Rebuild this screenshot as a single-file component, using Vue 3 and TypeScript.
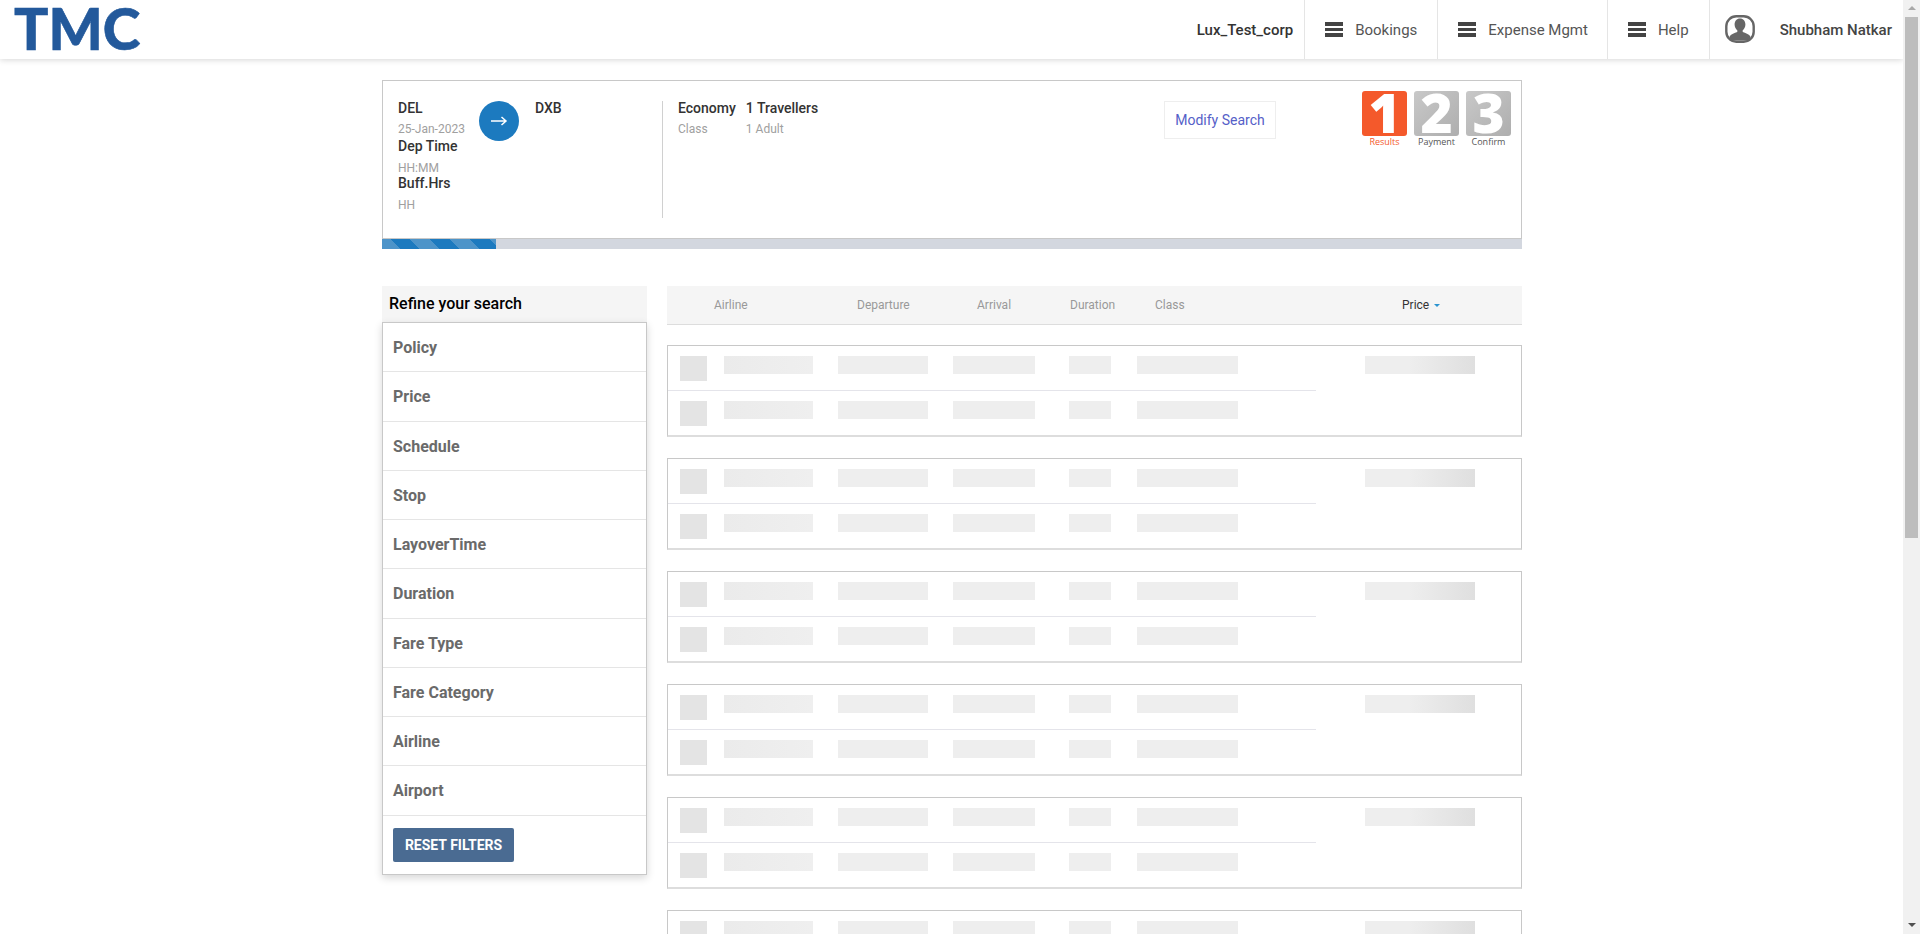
<script setup lang="ts">
const menus = ['Bookings', 'Expense Mgmt', 'Help']
const filters = [
  'Policy',
  'Price',
  'Schedule',
  'Stop',
  'LayoverTime',
  'Duration',
  'Fare Type',
  'Fare Category',
  'Airline',
  'Airport',
]
const steps = [
  { num: '1', label: 'Results', active: true },
  { num: '2', label: 'Payment', active: false },
  { num: '3', label: 'Confirm', active: false },
]
const cards = [1, 2, 3, 4, 5, 6]
const segments = [1, 2]
</script>

<template>
  <div class="page">
    <div class="content">
      <header class="topbar">
        <div class="logo">TMC</div>
        <div class="nav">
          <div class="corp">Lux_Test_corp</div>
          <div v-for="m in menus" :key="m" class="nav-item">
            <span class="burger"><i /><i /><i /></span>
            <span>{{ m }}</span>
          </div>
          <div class="user">
            <svg class="avatar" width="30" height="28" viewBox="0 0 30 28">
              <path
                d="M15 3.500c-3.300 0-5.400 2.600-5.400 6 0 2.500 1.100 4.600 2.700 5.700v1.700c-2.900 1-6 2-7.600 4.300v4.300h20.600v-4.300c-1.600-2.300-4.700-3.300-7.600-4.300v-1.700c1.600-1.100 2.700-3.200 2.700-5.700 0-3.400-2.100-6-5.400-6z"
                fill="#666"
              />
              <rect x="1.300" y="1.300" width="27.400" height="25.400" rx="10" fill="none" stroke="#666" stroke-width="2.400" />
            </svg>
            <span class="user-name">Shubham Natkar</span>
          </div>
        </div>
      </header>

      <main class="wrap">
        <section class="summary">
          <div class="summary-body">
            <div class="from">
              <div class="strong">DEL</div>
              <div class="muted">25-Jan-2023</div>
              <div class="strong dep">Dep Time</div>
              <div class="muted hhmm">HH:MM</div>
              <div class="strong buff">Buff.Hrs</div>
              <div class="muted hh">HH</div>
            </div>
            <div class="arrow">
              <svg width="18" height="12" viewBox="0 0 18 12">
                <path d="M1 6h15M11.500 2l4.500 4-4.500 4" fill="none" stroke="#fff" stroke-width="1.500" />
              </svg>
            </div>
            <div class="to strong">DXB</div>
            <div class="info">
              <div class="info-col">
                <div class="strong">Economy</div>
                <div class="muted">Class</div>
              </div>
              <div class="info-col">
                <div class="strong">1 Travellers</div>
                <div class="muted">1 Adult</div>
              </div>
            </div>
            <button class="modify">Modify Search</button>
            <div class="steps">
              <div v-for="s in steps" :key="s.num" class="step" :class="{ active: s.active }">
                <div class="step-num">{{ s.num }}</div>
                <div class="step-label">{{ s.label }}</div>
              </div>
            </div>
          </div>
          <div class="progress"><div class="progress-fill" /></div>
        </section>

        <div class="columns">
          <aside class="side">
            <div class="refine">Refine your search</div>
            <div class="filter-panel">
              <div v-for="f in filters" :key="f" class="filter">{{ f }}</div>
              <div class="reset-row">
                <button class="reset">RESET FILTERS</button>
              </div>
            </div>
          </aside>

          <div class="results">
            <div class="sort-bar">
              <span class="s-airline">Airline</span>
              <span class="s-dep">Departure</span>
              <span class="s-arr">Arrival</span>
              <span class="s-dur">Duration</span>
              <span class="s-class">Class</span>
              <span class="s-price">Price<i class="caret" /></span>
            </div>

            <div v-for="c in cards" :key="c" class="card">
              <div class="card-left">
                <div v-for="s in segments" :key="s" class="seg">
                  <div class="sk sk-logo" />
                  <div class="sk sk-a" />
                  <div class="sk sk-b" />
                  <div class="sk sk-c" />
                  <div class="sk sk-d" />
                  <div class="sk sk-e" />
                </div>
              </div>
              <div class="sk sk-price" />
            </div>
          </div>
        </div>
      </main>
    </div>

    <div class="scrollbar" aria-hidden="true">
      <div class="sb-up" />
      <div class="sb-thumb" />
      <div class="sb-track" />
      <div class="sb-down" />
    </div>
  </div>
</template>

<style>
html,
body {
  margin: 0;
  overflow: hidden;
}
</style>

<style scoped>
.page {
  display: flex;
  height: 934px;
  overflow: hidden;
  background: #fff;
  font-family: Roboto, 'Liberation Sans', sans-serif;
  font-size: 14px;
  color: #333;
}

.content {
  flex: 1;
  min-width: 0;
  overflow: hidden;
}

/* top bar */
.topbar {
  display: flex;
  align-items: stretch;
  justify-content: space-between;
  height: 59px;
  box-shadow: 0 1px 6px rgba(0, 0, 0, 0.16);
  position: relative;
  box-sizing: border-box;
  font-size: 15px;
}

.logo {
  margin-left: 14px;
  font-family: Lato, sans-serif;
  font-weight: 900;
  font-size: 57px;
  line-height: 56px;
  color: #23599b;
  -webkit-text-stroke: 0.6px #23599b;
}

.nav {
  display: flex;
  align-items: stretch;
}

.corp {
  display: flex;
  align-items: center;
  padding-right: 11px;
  font-weight: 500;
  color: #333;
}

.nav-item {
  display: flex;
  align-items: center;
  gap: 12px;
  padding: 0 20px;
  border-left: 1px solid #e5e5e5;
  color: #555;
}

.nav-item:nth-child(3) {
  padding-right: 19px;
}

.burger {
  display: flex;
  flex-direction: column;
  gap: 2px;
  width: 18px;
}

.burger i {
  display: block;
  height: 3.700px;
  background: #444;
}

.user {
  display: flex;
  align-items: center;
  gap: 25px;
  padding: 0 11px 0 15px;
  border-left: 1px solid #e5e5e5;
}

.avatar {
  margin-bottom: 1px;
}

.user-name {
  font-weight: 500;
  color: #444;
}

/* layout */
.wrap {
  width: 1140px;
  margin-left: 382px;
}

/* search summary */
.summary {
  margin-top: 21px;
}

.summary-body {
  display: flex;
  align-items: flex-start;
  box-sizing: border-box;
  height: 159px;
  padding: 20px 10px 0 15px;
  border: 1px solid #c8c8c8;
}

.strong {
  font-weight: 500;
  font-size: 14px;
  line-height: 16px;
  color: #333;
  white-space: nowrap;
}

.muted {
  font-size: 12px;
  line-height: 14px;
  color: #a0a0a0;
  margin-top: 6px;
}

.from {
  width: 81px;
  margin-top: -1px;
}

.dep {
  margin-top: 2px;
}

.hhmm {
  margin-top: 7px;
}

.buff {
  margin-top: 0;
}

.hh {
  margin-top: 7px;
}

.arrow {
  display: flex;
  align-items: center;
  justify-content: center;
  flex: none;
  width: 40px;
  height: 40px;
  border-radius: 50%;
  background: #1c7abf;
}

.to {
  width: 127px;
  margin: -1px 0 0 16px;
}

.info {
  display: flex;
  gap: 10px;
  height: 117px;
  padding-left: 15px;
  border-left: 1px solid #d0d0d0;
}

.info-col {
  margin-top: -1px;
}

.modify {
  width: 112px;
  height: 38px;
  margin-left: auto;
  padding: 0;
  border: 1px solid #eee;
  background: #fff;
  color: #5560c8;
  font: 400 14px Roboto, sans-serif;
}

.steps {
  display: flex;
  gap: 7px;
  margin: -10px 0 0 86px;
}

.step {
  width: 45px;
  text-align: center;
}

.step-num {
  height: 45px;
  border-radius: 3px;
  background: linear-gradient(135deg, #c8c8c8, #aeaeae);
  color: #fff;
  font-family: 'Open Sans', sans-serif;
  font-weight: 800;
  font-size: 55px;
  line-height: 42px;
}

.step-label {
  font-family: 'Open Sans', sans-serif;
  font-size: 9px;
  line-height: 12px;
  color: #555;
}

.step.active .step-num {
  background: #f4592b;
}

.step.active .step-label {
  color: #f4592b;
}

.progress {
  height: 10px;
  background: #d3d7df;
}

.progress-fill {
  width: 114px;
  height: 100%;
  background: repeating-linear-gradient(
    45deg,
    #4d94c9 0,
    #4d94c9 12.730px,
    #1c7abf 12.730px,
    #1c7abf 26.870px,
    #4d94c9 26.870px,
    #4d94c9 28.280px
  );
}

/* two columns */
.columns {
  display: flex;
  align-items: flex-start;
  margin-top: 37px;
  gap: 20px;
}

.side {
  width: 265px;
  flex: none;
}

.refine {
  height: 36px;
  padding-left: 7px;
  background: #f5f5f5;
  font-weight: 500;
  font-size: 16px;
  line-height: 36px;
  color: #000;
}

.filter-panel {
  box-sizing: border-box;
  border: 1px solid #c8c8c8;
  box-shadow: 0 3px 8px rgba(0, 0, 0, 0.16);
}

.filter {
  box-sizing: border-box;
  height: 49.250px;
  padding-left: 10px;
  border-bottom: 1px solid #e5e5e5;
  font-weight: 700;
  font-size: 16px;
  line-height: 49px;
  color: #6a6a6a;
}

.reset-row {
  padding: 12px 10px;
}

.reset {
  display: block;
  width: 121px;
  height: 34px;
  padding: 0;
  border: none;
  border-radius: 2px;
  background: #4a6b92;
  color: #fff;
  font: 700 14px Roboto, sans-serif;
}

/* results */
.results {
  flex: 1;
  min-width: 0;
}

.sort-bar {
  display: flex;
  align-items: center;
  box-sizing: border-box;
  height: 39px;
  margin-bottom: 20px;
  background: #f5f5f5;
  border-bottom: 1px solid #ddd;
  font-size: 12px;
  color: #999;
}

.s-airline {
  margin-left: 47px;
  width: 143px;
}

.s-dep {
  width: 120px;
}

.s-arr {
  width: 93px;
}

.s-dur {
  width: 85px;
}

.s-class {
  width: 247px;
}

.s-price {
  display: flex;
  align-items: center;
  color: #333;
}

.caret {
  width: 0;
  height: 0;
  margin-left: 5px;
  border-left: 3.500px solid transparent;
  border-right: 3.500px solid transparent;
  border-top: 3px solid #2a93d0;
}

.card {
  display: flex;
  align-items: flex-start;
  box-sizing: border-box;
  height: 92px;
  margin-bottom: 21px;
  border: 1px solid #c8c8c8;
  border-bottom: 2px solid #ddd;
}

.card-left {
  width: 648px;
  flex: none;
}

.seg {
  display: flex;
  align-items: flex-start;
  box-sizing: border-box;
  height: 45px;
  padding: 10px 0 0 12px;
}

.seg:first-child {
  border-bottom: 1px solid #e4e4ea;
}

.sk {
  flex: none;
  height: 18px;
  background: #eee;
}

.sk-logo {
  width: 27px;
  height: 25px;
  background: #e4e4e4;
}

.sk-a {
  width: 89px;
  margin-left: 17px;
  background: linear-gradient(90deg, #ebebeb, #efefef);
}

.sk-b {
  width: 90px;
  margin-left: 25px;
}

.sk-c {
  width: 82px;
  margin-left: 25px;
}

.sk-d {
  width: 42px;
  margin-left: 34px;
}

.sk-e {
  width: 101px;
  margin-left: 26px;
}

.sk-price {
  width: 110px;
  margin: 10px 0 0 49px;
  background: linear-gradient(90deg, #eee 40%, #dfdfdf);
}

/* page scrollbar */
.scrollbar {
  display: flex;
  flex-direction: column;
  flex: none;
  width: 17px;
  background: #f1f1f1;
}

.sb-up,
.sb-down {
  position: relative;
  flex: none;
  height: 17px;
}

.sb-up::after,
.sb-down::after {
  content: '';
  position: absolute;
  left: 5px;
  width: 0;
  height: 0;
  border-left: 4px solid transparent;
  border-right: 4px solid transparent;
}

.sb-up::after {
  top: 6px;
  border-bottom: 4px solid #a8a8a8;
}

.sb-down::after {
  top: 6px;
  border-top: 4px solid #505050;
}

.sb-thumb {
  flex: none;
  height: 521px;
  margin: 0 2px;
  background: #bdbdbd;
}

.sb-track {
  flex: 1;
}
</style>
